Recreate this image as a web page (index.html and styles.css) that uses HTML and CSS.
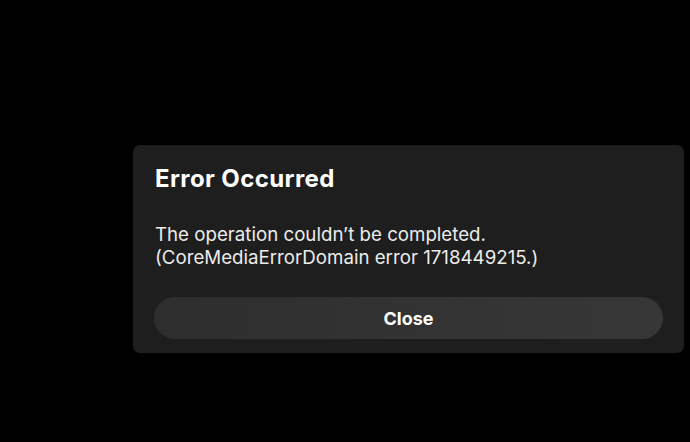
FILE: index.html
```html
<!DOCTYPE html>
<html lang="en">
<head>
<meta charset="utf-8">
<title>Error Occurred</title>
<link rel="stylesheet" href="styles.css">
</head>
<body>
<div class="screen">
  <div class="dialog" role="alertdialog" aria-labelledby="dlg-title">
    <h1 class="dialog-title" id="dlg-title">Error Occurred</h1>
    <p class="dialog-message">The operation couldn’t be completed.<br>(CoreMediaErrorDomain error 1718449215.)</p>
    <button class="dialog-button" type="button">Close</button>
  </div>
</div>
</body>
</html>
```
FILE: styles.css
```css
html, body {
  margin: 0;
  padding: 0;
  background: #000;
}
.screen {
  width: 690px;
  height: 442px;
  box-sizing: border-box;
  padding: 145px 6px 0 133px;
  display: flex;
  align-items: flex-start;
  font-family: Inter, "Noto Sans", sans-serif;
}
.dialog {
  width: 551px;
  box-sizing: border-box;
  background: #1e1e1e;
  border-radius: 7px;
  padding: 20px 21px 14px 21px;
  display: flex;
  flex-direction: column;
}
.dialog-title {
  margin: 0 0 0 1px;
  font-size: 24px;
  line-height: 28px;
  font-weight: 700;
  color: #fff;
  letter-spacing: 0.4px;
}
.dialog-message {
  margin: 30px 0 0 1px;
  font-size: 18.7px;
  line-height: 23px;
  font-weight: 400;
  color: #ececec;
}
.dialog-button {
  margin-top: 28px;
  height: 42px;
  width: 100%;
  border: none;
  border-radius: 21px;
  background: linear-gradient(90deg, #2e2e2e, #373737);
  color: #fff;
  font-family: inherit;
  font-size: 18px;
  font-weight: 700;
  padding: 0;
}
```
